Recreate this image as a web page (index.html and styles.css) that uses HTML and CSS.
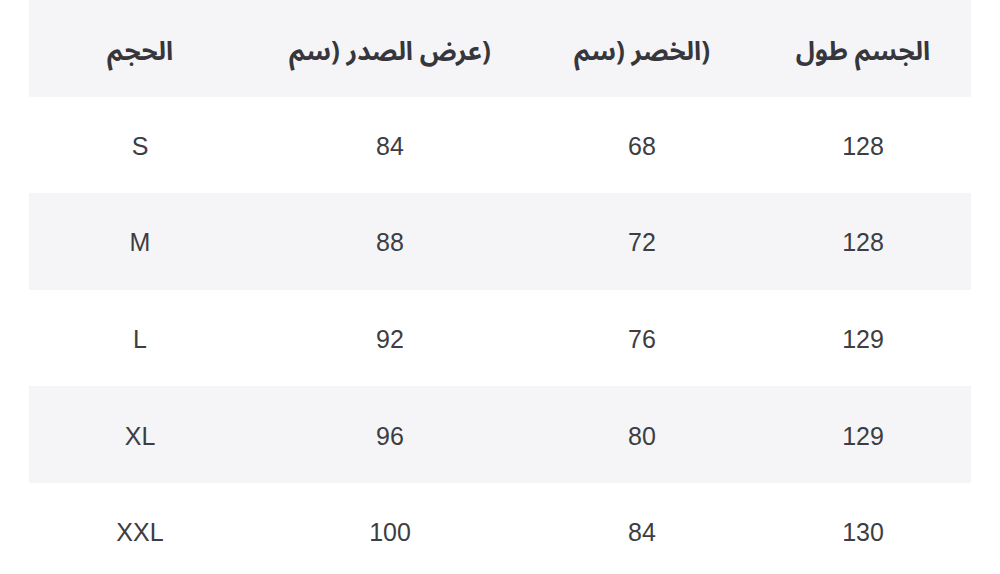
FILE: index.html
```html
<!DOCTYPE html>
<html lang="ar">
<head>
<meta charset="utf-8">
<title>جدول المقاسات</title>
<link rel="stylesheet" href="styles.css">
</head>
<body>
<div class="size-table">
  <div class="row head">
    <div class="cell" dir="rtl">الحجم</div>
    <div class="cell" dir="rtl">(عرض الصدر (سم</div>
    <div class="cell" dir="rtl">(الخصر (سم</div>
    <div class="cell" dir="rtl">الجسم طول</div>
  </div>
  <div class="row">
    <div class="cell">S</div><div class="cell">84</div><div class="cell">68</div><div class="cell">128</div>
  </div>
  <div class="row alt">
    <div class="cell">M</div><div class="cell">88</div><div class="cell">72</div><div class="cell">128</div>
  </div>
  <div class="row">
    <div class="cell">L</div><div class="cell">92</div><div class="cell">76</div><div class="cell">129</div>
  </div>
  <div class="row alt">
    <div class="cell">XL</div><div class="cell">96</div><div class="cell">80</div><div class="cell">129</div>
  </div>
  <div class="row">
    <div class="cell">XXL</div><div class="cell">100</div><div class="cell">84</div><div class="cell">130</div>
  </div>
</div>
</body>
</html>
```

FILE: styles.css
```css
html, body {
  margin: 0;
  padding: 0;
  background: #ffffff;
}

body {
  width: 1000px;
  height: 574px;
  overflow: hidden;
}

.size-table {
  margin: 0 29px;
  display: flex;
  flex-direction: column;
}

.row {
  display: grid;
  grid-template-columns: 222px 278px 226px 216px;
  height: 96.6px;
  align-items: center;
  padding-top: 3px;
  box-sizing: border-box;
  font-family: "Liberation Sans", Arial, sans-serif;
  font-size: 25px;
  color: #3d3d42;
}

.row.head,
.row.alt {
  background: #f5f5f7;
}

.row.head {
  padding-top: 6px;
  font-family: "Noto Sans Arabic", "Noto Naskh Arabic", "DejaVu Sans", sans-serif;
  font-weight: bold;
  font-size: 26px;
  color: #36363c;
}

.cell {
  text-align: center;
}
```
